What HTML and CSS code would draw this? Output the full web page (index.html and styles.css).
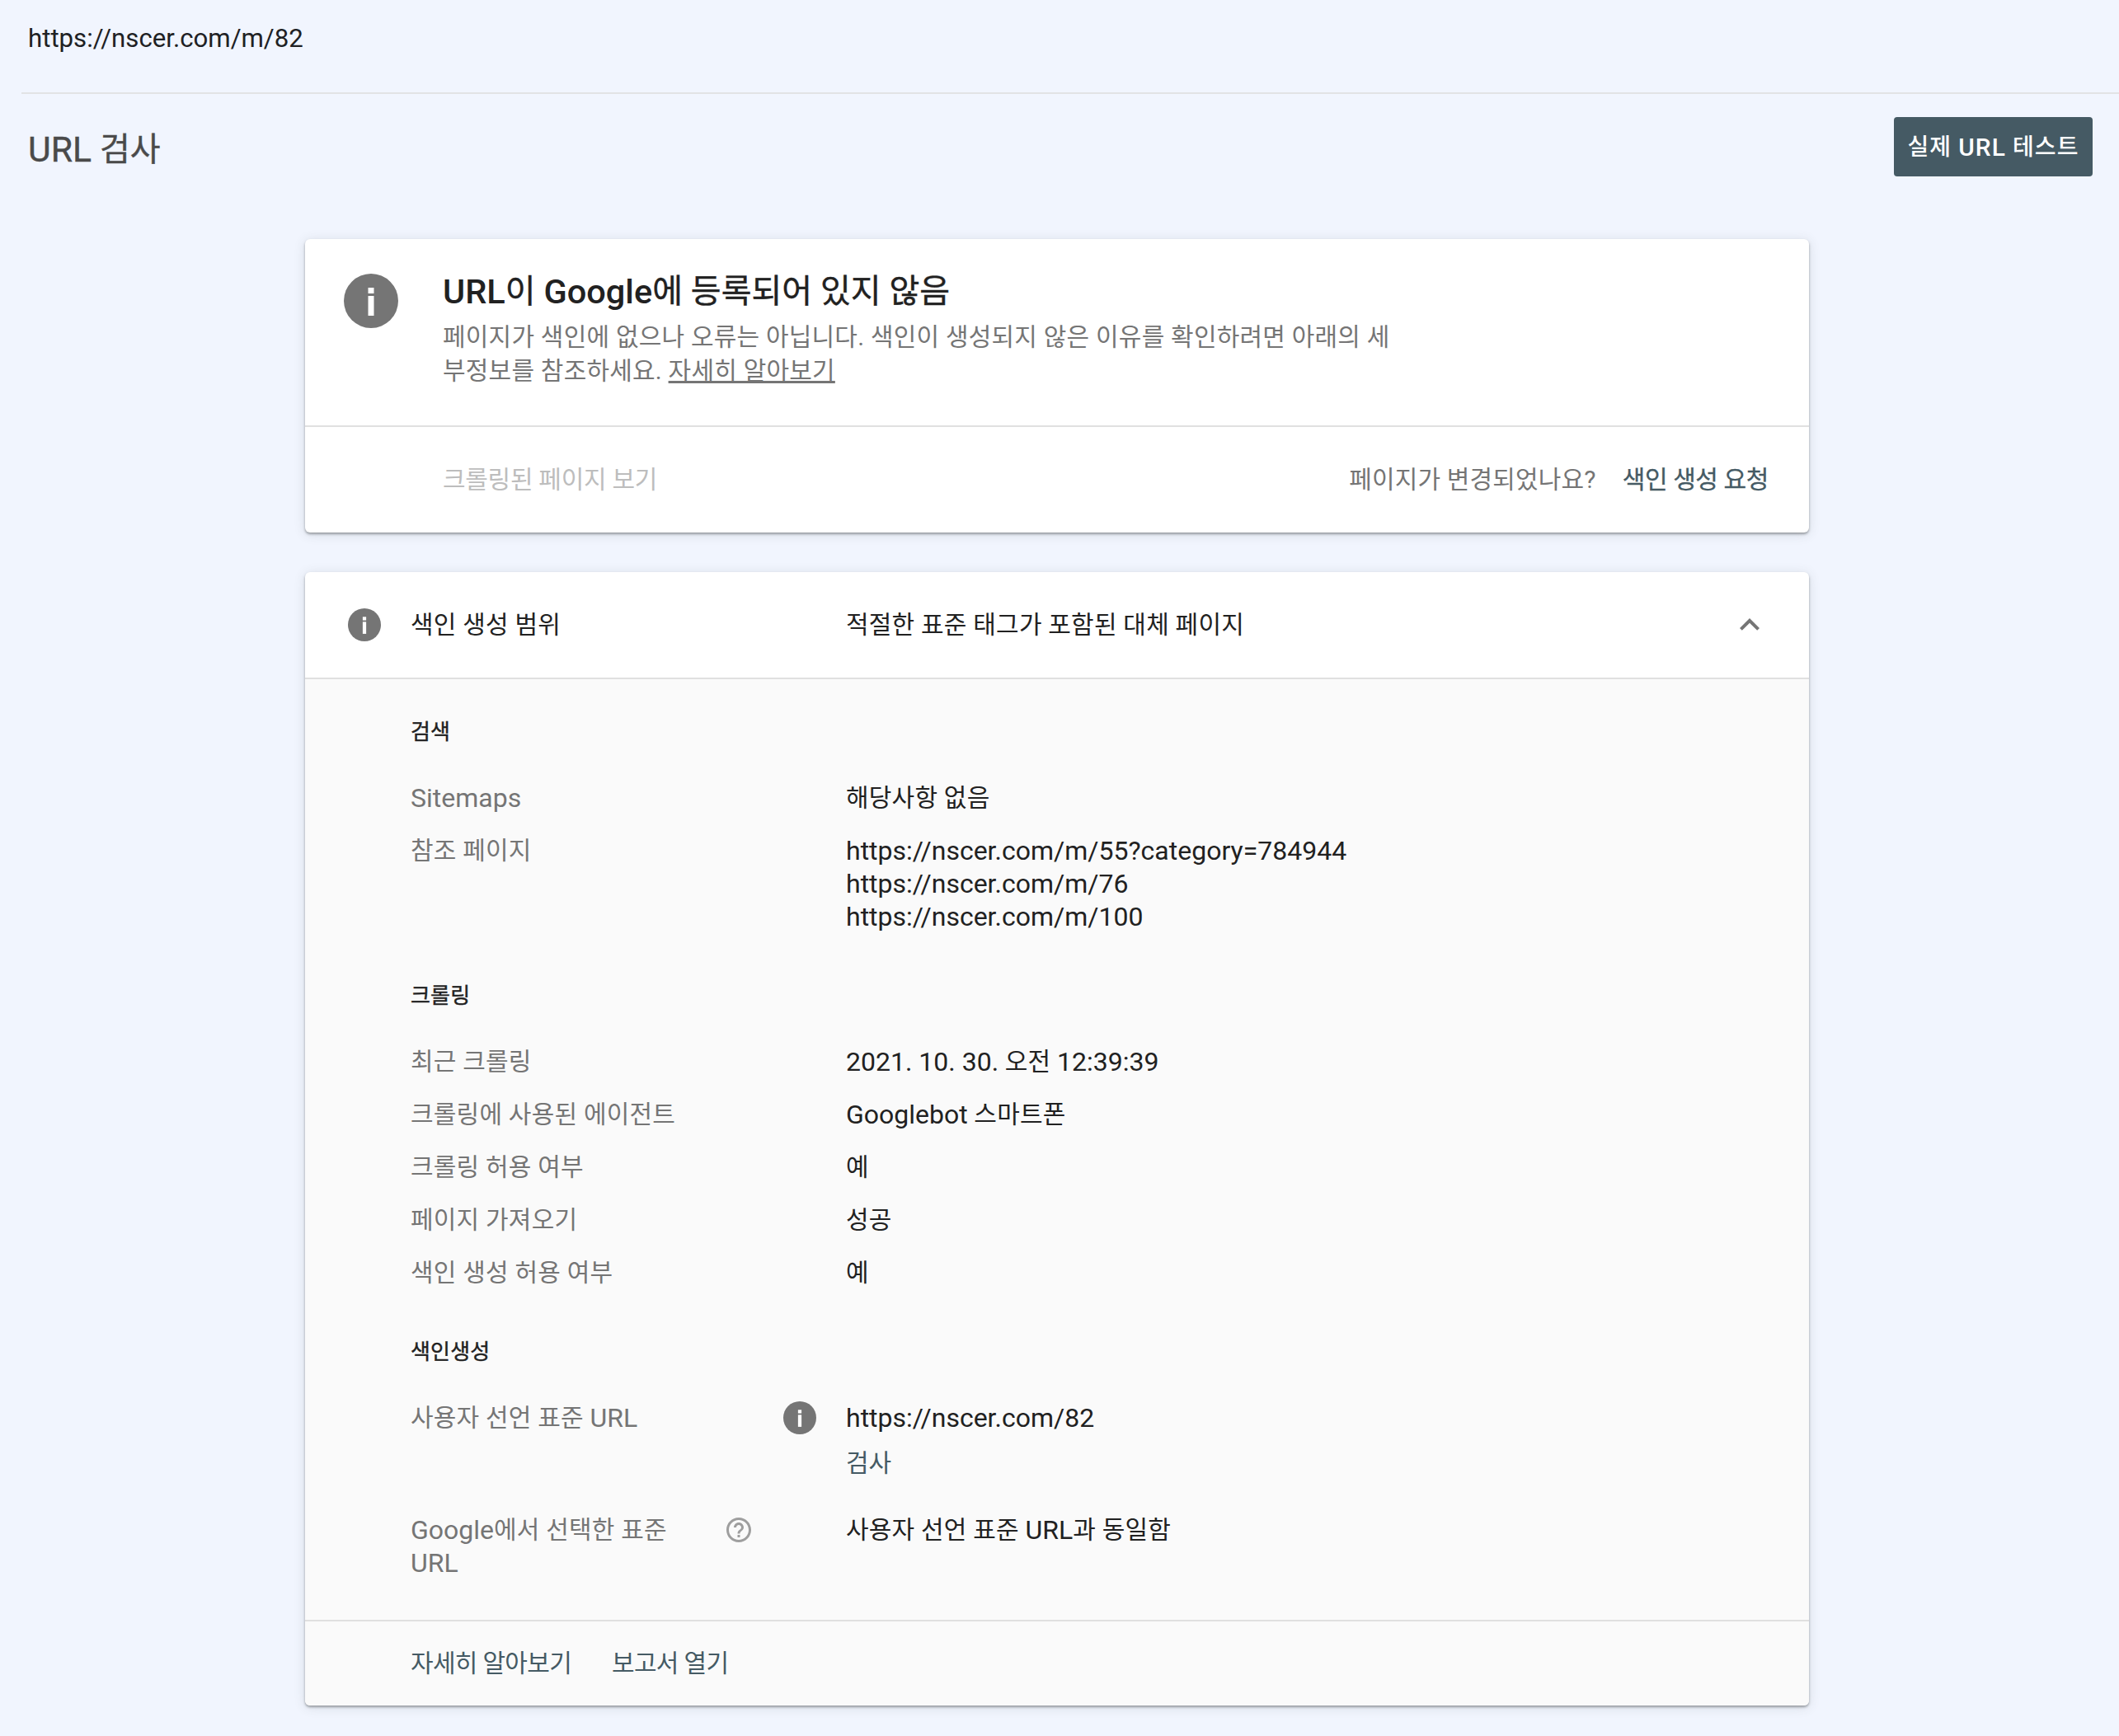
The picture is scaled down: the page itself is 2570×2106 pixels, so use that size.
FILE: index.html
```html
<!DOCTYPE html>
<html lang="ko">
<head>
<meta charset="utf-8">
<title>URL 검사</title>
<link rel="stylesheet" href="styles.css">
</head>
<body>
<header class="urlbar"><span class="urltext">https://nscer.com/m/82</span></header>
<div class="titlebar">
  <h1 class="pagetitle"><span class="lat">URL</span> 검사</h1>
  <button class="testbtn">실제 <span class="lat">URL</span> 테스트</button>
</div>
<main class="content">
  <section class="card">
    <div class="summary">
      <svg class="icon-lg" viewBox="0 0 66 66"><circle cx="33" cy="33" r="33" fill="#757575"/><rect x="29.5" y="17" width="7" height="7" fill="#fff"/><rect x="29.5" y="27" width="7" height="24" fill="#fff"/></svg>
      <div class="summary-text">
        <h2 class="summary-title"><span class="lat">URL</span>이 <span class="lat">Google</span>에 등록되어 있지 않음</h2>
        <p class="summary-desc">페이지가 색인에 없으나 오류는 아닙니다. 색인이 생성되지 않은 이유를 확인하려면 아래의 세부정보를 참조하세요. <a class="learn">자세히 알아보기</a></p>
      </div>
    </div>
    <div class="actions">
      <span class="disabled">크롤링된 페이지 보기</span>
      <div class="actions-right">
        <span class="question">페이지가 변경되었나요?</span>
        <a class="action-link">색인 생성 요청</a>
      </div>
    </div>
  </section>

  <section class="card">
    <div class="cov-head">
      <svg class="icon-sm" viewBox="0 0 66 66"><circle cx="33" cy="33" r="33" fill="#757575"/><rect x="29.5" y="17" width="7" height="7" fill="#fff"/><rect x="29.5" y="27" width="7" height="24" fill="#fff"/></svg>
      <span class="cov-label">색인 생성 범위</span>
      <span class="cov-value">적절한 표준 태그가 포함된 대체 페이지</span>
      <svg class="chevron" viewBox="0 0 24 24"><path fill="#757575" d="M12 8l-6 6 1.41 1.41L12 10.83l4.59 4.58L18 14z"/></svg>
    </div>
    <div class="cov-body">
      <h3 class="sec">검색</h3>
      <div class="row"><div class="lab"><span class="lat">Sitemaps</span></div><div class="val">해당사항 없음</div></div>
      <div class="row"><div class="lab">참조 페이지</div><div class="val"><span class="lat">https://nscer.com/m/55?category=784944</span><br><span class="lat">https://nscer.com/m/76</span><br><span class="lat">https://nscer.com/m/100</span></div></div>

      <h3 class="sec sec-next">크롤링</h3>
      <div class="row"><div class="lab">최근 크롤링</div><div class="val"><span class="lat">2021. 10. 30.</span> 오전 <span class="lat">12:39:39</span></div></div>
      <div class="row"><div class="lab">크롤링에 사용된 에이전트</div><div class="val"><span class="lat">Googlebot</span> 스마트폰</div></div>
      <div class="row"><div class="lab">크롤링 허용 여부</div><div class="val">예</div></div>
      <div class="row"><div class="lab">페이지 가져오기</div><div class="val">성공</div></div>
      <div class="row"><div class="lab">색인 생성 허용 여부</div><div class="val">예</div></div>

      <h3 class="sec sec-next">색인생성</h3>
      <div class="row row-inspect">
        <div class="lab lab-icon">
          <span class="lab-text">사용자 선언 표준 <span class="lat">URL</span></span>
          <svg class="icon-sm icon-end" viewBox="0 0 66 66"><circle cx="33" cy="33" r="33" fill="#757575"/><rect x="29.5" y="17" width="7" height="7" fill="#fff"/><rect x="29.5" y="27" width="7" height="24" fill="#fff"/></svg>
        </div>
        <div class="val"><span class="lat">https://nscer.com/82</span><a class="inspect">검사</a></div>
      </div>
      <div class="row">
        <div class="lab lab-icon">
          <span class="lab-text"><span class="lat">Google</span>에서 선택한 표준 <span class="lat">URL</span></span>
          <svg class="help" viewBox="0 0 24 24"><path fill="#9e9e9e" d="M11 18h2v-2h-2v2zm1-16C6.48 2 2 6.48 2 12s4.48 10 10 10 10-4.48 10-10S17.52 2 12 2zm0 18c-4.41 0-8-3.59-8-8s3.59-8 8-8 8 3.59 8 8-3.59 8-8 8zm0-14c-2.21 0-4 1.79-4 4h2c0-1.1.9-2 2-2s2 .9 2 2c0 2-3 1.75-3 5h2c0-2.25 3-2.5 3-5 0-2.21-1.79-4-4-4z"/></svg>
        </div>
        <div class="val">사용자 선언 표준 <span class="lat">URL</span>과 동일함</div>
      </div>
    </div>
    <div class="cov-foot">
      <a class="foot-link">자세히 알아보기</a>
      <a class="foot-link">보고서 열기</a>
    </div>
  </section>
</main>
</body>
</html>
```
FILE: styles.css
```css
* { box-sizing: border-box; }
html, body { margin: 0; padding: 0; }
body {
  width: 2570px;
  height: 2106px;
  overflow: hidden;
  background: #f1f5fe;
  font-family: Roboto, "Noto Sans CJK KR", sans-serif;
  color: #212121;
}
.lat {
  font-size: 1.067em;
  line-height: 1;
  letter-spacing: 0;
  vertical-align: -1px;
}
.urlbar {
  height: 114px;
  margin-left: 26px;
  border-bottom: 2px solid #e2e3e5;
  padding: 27px 0 0 8px;
}
.urltext { font-size: 31.2px; line-height: 40px; display: block; color: #202124; }
.titlebar {
  display: flex;
  justify-content: space-between;
  align-items: flex-start;
  height: 176px;
  padding: 28px 32px 0 34px;
}
.pagetitle {
  margin: 16px 0 0;
  font-size: 40px;
  line-height: 48px;
  font-weight: 400;
  -webkit-text-stroke: 0.4px #4a4a4a;
  color: #4a4a4a;
}
.testbtn {
  width: 241px;
  height: 72px;
  padding: 2px 0 0;
  border: 0;
  border-radius: 4px;
  background: #455a64;
  color: #fff;
  font: 500 28px/40px Roboto, "Noto Sans CJK KR", sans-serif;
  letter-spacing: 1.1px;
}
.testbtn .lat { letter-spacing: 1.1px; }
.content {
  margin-left: 370px;
  width: 1824px;
  display: flex;
  flex-direction: column;
  gap: 48px;
}
.card {
  background: #fff;
  border-radius: 6px;
  box-shadow: 0 2px 3px rgba(60,64,67,.45), 0 2px 14px rgba(60,64,67,.15);
  overflow: hidden;
}
.summary {
  display: flex;
  height: 228px;
  border-bottom: 2px solid #e0e0e0;
  padding: 42px 0 0 47px;
}
.icon-lg { width: 66px; height: 66px; flex: none; }
.summary-text { margin-left: 54px; width: 1160px; margin-top: -2px; }
.summary-title {
  margin: 0;
  font-size: 40px;
  line-height: 48px;
  font-weight: 400;
  -webkit-text-stroke: 0.4px #212121;
  color: #212121;
}
.summary-title .lat { font-size: 41.5px; font-weight: 500; -webkit-text-stroke: 0; }
.summary-desc {
  margin: 10px 0 0;
  font-size: 30px;
  line-height: 41px;
  letter-spacing: 0.2px;
  color: #757575;
}
.learn { text-decoration: underline; }
.actions {
  display: flex;
  justify-content: space-between;
  align-items: center;
  height: 128px;
  padding: 0 49px 0 167px;
  font-size: 30px;
  line-height: 40px;
}
.disabled { color: #bdbdbd; letter-spacing: -0.3px; }
.actions-right { display: flex; gap: 32px; }
.question { color: #757575; letter-spacing: 0.15px; }
.action-link { color: #455a64; letter-spacing: -0.4px; -webkit-text-stroke: 0.3px #455a64; }
.cov-head {
  display: flex;
  align-items: center;
  height: 130px;
  padding: 0 48px 0 52px;
  border-bottom: 2px solid #e0e0e0;
  font-size: 30px;
  line-height: 40px;
  letter-spacing: 0.2px;
}
.icon-sm { width: 40px; height: 40px; flex: none; }
.cov-label { width: 528px; margin-left: 36px; flex: none; }
.cov-value { flex: 1; }
.chevron { width: 48px; height: 48px; flex: none; }
.cov-body {
  background: #fafafa;
  padding: 44px 0 36px 128px;
}
.sec {
  margin: 0 0 29px;
  font-size: 26px;
  line-height: 40px;
  font-weight: 400;
  letter-spacing: 0.2px;
  -webkit-text-stroke: 0.4px #212121;
  color: #212121;
}
.sec-next { margin-top: 43px; }
.row {
  display: flex;
  padding: 11px 0 13px;
  font-size: 30px;
  line-height: 40px;
  letter-spacing: 0.2px;
}
.row-inspect { padding-bottom: 30px; }
.lab { width: 528px; flex: none; color: #757575; }
.lab-icon { display: flex; align-items: flex-start; }
.lab-text { width: 340px; flex: none; }
.icon-end { margin-left: 112px; }
.help { width: 36px; height: 36px; margin: 2px 0 0 40px; flex: none; }
.val { color: #212121; }
.inspect { display: block; margin-top: 15px; color: #455a64; letter-spacing: 0; }
.cov-foot {
  display: flex;
  align-items: center;
  gap: 49px;
  height: 104px;
  padding-left: 128px;
  background: #fafafa;
  border-top: 2px solid #e0e0e0;
  font-size: 30px;
  line-height: 40px;
  letter-spacing: -0.7px;
}
.foot-link { color: #455a64; }
```
